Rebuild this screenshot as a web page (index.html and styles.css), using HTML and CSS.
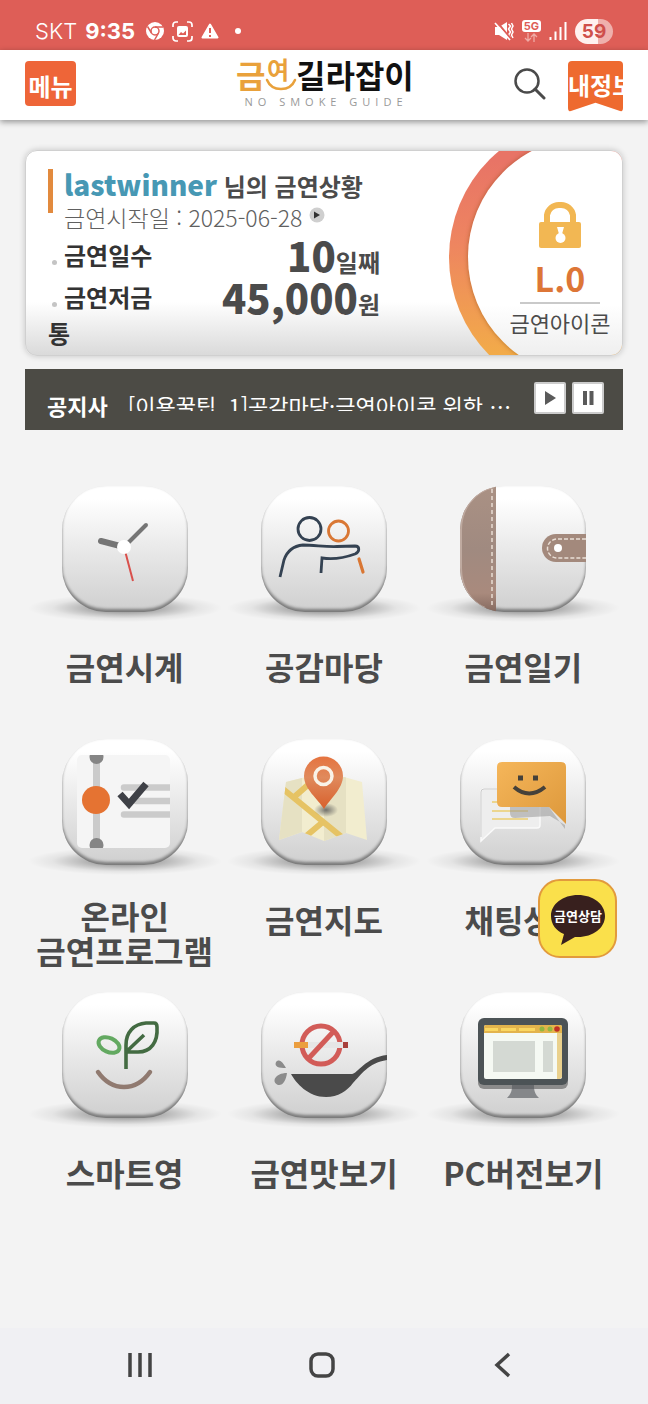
FILE: index.html
```html
<!doctype html>
<html lang="ko">

<head>
    <meta charset="utf-8">
    <meta name="viewport" content="width=device-width, initial-scale=1.0">
    <title>금연길라잡이</title>
    <link rel="stylesheet" href="styles.css">
</head>

<body>
    <!-- 상태 표시줄 -->
    <div class="status-bar">
        <div class="status-left">
            <span class="carrier">SKT</span>
            <span class="clock">9:35</span>
            <svg class="status-icon" width="18" height="18" viewBox="0 0 18 18">
                <circle cx="9" cy="9" r="9" fill="#fff"/>
                <circle cx="9" cy="9" r="4" fill="#fff" stroke="#de5e57" stroke-width="1.5"/>
                <path d="M9 5h8M5.500 11L1.500 4.500M12.500 11L8.500 18" stroke="#de5e57" stroke-width="1.500" fill="none"/>
            </svg>
            <svg class="status-icon" width="21" height="21" viewBox="0 0 21 21">
                <path d="M1 6V4a3 3 0 0 1 3-3h2M15 1h2a3 3 0 0 1 3 3v2M20 15v2a3 3 0 0 1-3 3h-2M6 20H4a3 3 0 0 1-3-3v-2" fill="none" stroke="#fff" stroke-width="1.700"/>
                <rect x="5" y="5" width="11" height="11" rx="2" fill="#fff"/>
                <path d="M6.500 14l2.500-3 2 1.500 3-3v4.500z" fill="#de5e57"/>
            </svg>
            <svg class="status-icon" width="18" height="16" viewBox="0 0 18 16">
                <path d="M9 1.500L16.500 14.500H1.500z" fill="#fff" stroke="#fff" stroke-width="2" stroke-linejoin="round"/>
                <path d="M9 5v5M9 12v2" stroke="#de5e57" stroke-width="2"/>
            </svg>
            <span class="dot"></span>
        </div>
        <div class="status-right">
            <svg width="20" height="20" viewBox="0 0 20 20">
                <path d="M1 6h4l8-5v18l-8-5H1z" fill="#fff"/>
                <path d="M14.500 3l2 2-2 3 2 3-2 3 2 3M17.500 2l1.500 3-1.500 3 1.500 3-1.500 3 1.500 3" fill="none" stroke="#fff" stroke-width="1.500"/>
                <path d="M3 1l14 17" stroke="#de5e57" stroke-width="2"/>
                <path d="M1 2l15 17" stroke="#fff" stroke-width="1.700"/>
            </svg>
            <span class="network">
                <b>5G</b>
                <svg width="14" height="9" viewBox="0 0 14 9">
                    <path d="M4 0v8M1 5l3 3 3-3M10 9V1M7 4l3-3 3 3" fill="none" stroke="#efaaa5" stroke-width="1.300"/>
                </svg>
            </span>
            <svg width="18" height="18" viewBox="0 0 18 18">
                <path d="M1.500 18v-3M6.500 18V9.500M11.500 18V5M16.500 18V0" stroke="#fff" stroke-width="2"/>
            </svg>
            <span class="battery">59</span>
        </div>
    </div>

    <header class="header">
        <button class="menu-button" type="button">메뉴</button>
        <a class="logo" href="#" aria-label="금연길라잡이">
            <svg width="176" height="34" viewBox="0 0 176 34">
                <text x="0" y="27" class="logo-orange">금</text>
                <text x="31" y="18" class="logo-orange logo-small">여</text>
                <path d="M31 19c5 12 23 12 28 0" fill="none" stroke="#e9a13b" stroke-width="2.500" stroke-linecap="round"/>
                <text x="60" y="27" class="logo-black">길라잡이</text>
            </svg>
            <span class="logo-sub">NO SMOKE GUIDE</span>
        </a>
        <div class="header-right">
            <button class="search-button" type="button" aria-label="검색">
                <svg width="32" height="32" viewBox="0 0 32 32">
                    <circle cx="13" cy="13" r="11.500" fill="none" stroke="#4a4a4a" stroke-width="2.500"/>
                    <path d="M21 21l9 9" stroke="#4a4a4a" stroke-width="3" stroke-linecap="round"/>
                </svg>
            </button>
            <a class="my-info" href="#">내정보</a>
        </div>
    </header>

    <main class="main">
        <!-- 금연상황 -->
        <section class="card">
            <div class="summary">
                <div class="summary-head">
                    <div>
                        <h1 class="user"><strong>lastwinner</strong> 님의 금연상황</h1>
                        <p class="start-date">금연시작일 : 2025-06-28
                            <svg width="16" height="16" viewBox="0 0 16 16">
                                <circle cx="8" cy="8" r="7.500" fill="#cfcfcf"/>
                                <path d="M5 4.500l6 3.500-6 3.500z" fill="#333"/>
                            </svg>
                        </p>
                    </div>
                </div>
                <ul class="stats">
                    <li>
                        <span class="stat-label">금연일수</span>
                        <span class="stat-value"><strong>10</strong>일째</span>
                    </li>
                    <li>
                        <span class="stat-label">금연저금통</span>
                        <span class="stat-value"><strong>45,000</strong>원</span>
                    </li>
                </ul>
            </div>
            <div class="level">
                <svg width="42" height="46" viewBox="0 0 42 46">
                    <path d="M8 22V13a12 12 0 0 1 12-10h2a12 12 0 0 1 12 10v9" fill="none" stroke="#f2b753" stroke-width="6"/>
                    <rect x="0" y="20" width="42" height="26" rx="2" fill="#f2b753"/>
                    <path d="M18 25h7l-2 7h-3z" fill="#fff"/>
                    <circle cx="21.500" cy="36" r="5" fill="#fff"/>
                </svg>
                <strong class="level-value">L.0</strong>
                <span class="level-label">금연아이콘</span>
            </div>
        </section>

        <!-- 공지사항 -->
        <section class="notice">
            <h2 class="notice-title">공지사</h2>
            <a class="notice-text" href="#">[이용꿀팁_1]공감마당·금연아이콘 위한 ⋯</a>
            <button class="notice-button" type="button" aria-label="재생">
                <svg width="12" height="14" viewBox="0 0 12 14"><path d="M1 0l11 7-11 7z" fill="#5a5a5a"/></svg>
            </button>
            <button class="notice-button" type="button" aria-label="일시정지">
                <svg width="12" height="14" viewBox="0 0 12 14"><path d="M1 0h4v14H1zM7.500 0h4v14h-4z" fill="#5a5a5a"/></svg>
            </button>
        </section>

        <!-- 메뉴 아이콘 -->
        <nav class="menu-grid">
            <a class="menu-item" href="#">
                <span class="tile">
                    <svg class="tile-icon" viewBox="0 0 126 126">
                        <path d="M39 55l23 6" stroke="#757575" stroke-width="6" stroke-linecap="round"/>
                        <path d="M62 61l22-22" stroke="#757575" stroke-width="4" stroke-linecap="round"/>
                        <path d="M62 61l9 34" stroke="#d9504c" stroke-width="2"/>
                        <circle cx="62" cy="61" r="7" fill="#fff"/>
                    </svg>
                </span>
                <span class="label">금연시계</span>
            </a>
            <a class="menu-item" href="#">
                <span class="tile">
                    <svg class="tile-icon" viewBox="0 0 126 126" fill="none" stroke="#344252" stroke-width="2.800">
                        <circle cx="48.500" cy="43" r="11.500"/>
                        <circle cx="77.500" cy="45" r="10" stroke="#d97734"/>
                        <path d="M19 91l4-17c3-9 9-14 19-15 12 0 22 2 34 1.500l18-.5c5 0 5 6 0 8-11 4-21 6-33 4l-1 15"/>
                        <path d="M98 73l4 13" stroke="#d97734" stroke-width="3.200" stroke-linecap="round"/>
                    </svg>
                </span>
                <span class="label">공감마당</span>
            </a>
            <a class="menu-item" href="#">
                <span class="tile">
                    <svg class="tile-icon" viewBox="0 0 126 126">
                        <defs>
                            <linearGradient id="leather" x1="0" y1="0" x2="0" y2="1">
                                <stop offset="0" stop-color="#aa9184"/>
                                <stop offset="0.500" stop-color="#a08a80"/>
                                <stop offset="0.850" stop-color="#a98a7d"/>
                                <stop offset="1" stop-color="#84695f"/>
                            </linearGradient>
                        </defs>
                        <path d="M36 0v126A44 44 0 0 1 0 82V44A44 44 0 0 1 36 0z" fill="url(#leather)"/>
                        <path d="M34 1C14 5 1 23 1 44v38c0 20 10 34 24 40" fill="none" stroke="#bfaaa0" stroke-width="2"/>
                        <path d="M32 3v118" stroke="#e9ddd3" stroke-width="1.500" stroke-dasharray="4 3"/>
                        <path d="M126 48H96a14 14 0 0 0 0 28h30z" fill="#a3897c"/>
                        <path d="M126 53H97a9 9 0 0 0 0 19h29" fill="none" stroke="#eadfd6" stroke-width="1.500" stroke-dasharray="4 2"/>
                        <circle cx="98" cy="62" r="4" fill="#fff"/>
                    </svg>
                </span>
                <span class="label">금연일기</span>
            </a>

            <a class="menu-item" href="#">
                <span class="tile">
                    <svg class="tile-icon" viewBox="0 0 126 126">
                        <defs><clipPath id="panel"><rect x="15" y="16" width="93" height="93" rx="5"/></clipPath></defs>
                        <g clip-path="url(#panel)">
                            <path d="M15 16h93v93H15z" fill="#f5f5f5"/>
                            <path d="M34.500 16v93" stroke="#cbcbcb" stroke-width="7"/>
                            <path d="M62 48.500h50M74 62h40M62 75.500h50" stroke="#cbcbcb" stroke-width="6.500" stroke-linecap="round"/>
                            <circle cx="34.500" cy="18" r="7" fill="#858585"/>
                            <circle cx="34.500" cy="106" r="7" fill="#858585"/>
                            <circle cx="34" cy="61" r="14" fill="#e57332"/>
                        </g>
                        <path d="M58 55l9 10 17-20" fill="none" stroke="#3f4147" stroke-width="7"/>
                    </svg>
                </span>
                <span class="label two-lines">온라인<br>금연프로그램</span>
            </a>
            <a class="menu-item" href="#">
                <span class="tile">
                    <svg class="tile-icon" viewBox="0 0 126 126">
                        <defs>
                            <clipPath id="map"><path d="M25 43l20-5 18 5 20-5 18 5 5 58-21-7-22 8-22-9-23 8z"/></clipPath>
                            <linearGradient id="pin" x1="0" y1="0" x2="0" y2="1">
                                <stop offset="0" stop-color="#e5733f"/>
                                <stop offset="0.400" stop-color="#e08a5c"/>
                                <stop offset="1" stop-color="#d8602c"/>
                            </linearGradient>
                            <radialGradient id="pin-shade">
                                <stop offset="0" stop-color="#555" stop-opacity="0.800"/>
                                <stop offset="1" stop-color="#555" stop-opacity="0"/>
                            </radialGradient>
                        </defs>
                        <g clip-path="url(#map)">
                            <path d="M15 35h95v70H15z" fill="#f2edcf"/>
                            <path d="M15 35h26v70H15zM63 35h22v70H63z" fill="#e6e1c3"/>
                            <path d="M22 50l60 49M32 59l16-14M63 82L44 98" stroke="#e6c364" stroke-width="6"/>
                        </g>
                        <ellipse cx="65" cy="71" rx="12" ry="7" fill="url(#pin-shade)"/>
                        <path d="M63 70C57 60 43 50 43 37a19.500 19.500 0 0 1 39 0c0 13-14 24-19 33z" fill="url(#pin)"/>
                        <circle cx="62.500" cy="37" r="8.500" fill="none" stroke="#f9f3e8" stroke-width="3.500"/>
                    </svg>
                </span>
                <span class="label">금연지도</span>
            </a>
            <a class="menu-item" href="#">
                <span class="tile">
                    <svg class="tile-icon" viewBox="0 0 126 126">
                        <defs>
                            <linearGradient id="bubble" x1="0" y1="0" x2="1" y2="1">
                                <stop offset="0" stop-color="#f5b65a"/>
                                <stop offset="1" stop-color="#dd983b"/>
                            </linearGradient>
                        </defs>
                        <path d="M24 50h53q3 0 3 3v33q0 3-3 3H35L21 102V53q0-3 3-3z" fill="#eee" stroke="#fafafa" stroke-width="1.500"/>
                        <path d="M21 98V53q0-3 3-3h13" fill="none" stroke="#c9c9c9"/>
                        <path d="M32 63h20M32 72h36M32 80h36" stroke="#ecd68f" stroke-width="2"/>
                        <path d="M50 68h39l16 22v-4L90 77l-35 2q-5 0-5-5z" fill="#999" opacity="0.550"/>
                        <path d="M42 23h59q5 0 5 5v57L89 68H42q-5 0-5-5V28q0-5 5-5z" fill="url(#bubble)"/>
                        <path d="M58 36.500h5v5h-5zM73 36.500h5v5h-5z" fill="#45413a"/>
                        <path d="M54 48q15 13 31 0" fill="none" stroke="#45413a" stroke-width="4"/>
                    </svg>
                </span>
                <span class="label">채팅상담</span>
            </a>

            <a class="menu-item" href="#">
                <span class="tile">
                    <svg class="tile-icon" viewBox="0 0 126 126" fill="none">
                        <ellipse cx="47" cy="53" rx="11" ry="7" stroke="#63a961" stroke-width="4" transform="rotate(24 47 53)"/>
                        <path d="M64 77V53c0-13 8-21 20-22h8q3 0 3 4c1 15-6 25-19 25H64l18-17" stroke="#436b42" stroke-width="3.600" stroke-linejoin="round"/>
                        <path d="M36 80c14 20 38 20 52 0" stroke="#907a70" stroke-width="4.500" stroke-linecap="round"/>
                    </svg>
                </span>
                <span class="label">스마트영</span>
            </a>
            <a class="menu-item" href="#">
                <span class="tile">
                    <svg class="tile-icon" viewBox="0 0 126 126">
                        <circle cx="60" cy="53" r="19" fill="none" stroke="#d25c58" stroke-width="5"/>
                        <path d="M46 50h36v6H46z" fill="#e6e6e6"/>
                        <path d="M33 50h14v6H33z" fill="#eb9e3f"/>
                        <path d="M82 50h5v6h-5z" fill="#a8403c"/>
                        <path d="M47 67l26-28" stroke="#d25c58" stroke-width="5"/>
                        <path d="M30 82h61c5 0 14-17 35-19v5c-19 3-26 15-34 23-6 8-15 14-27 14-18 0-30-14-35-23z" fill="#4a4a4a"/>
                        <path d="M15 70c4-4 7 1 10 6-7 0-12-1-10-6zM26 81c-1 7-4 13-9 12-7-3-3-12 9-12z" fill="#8b8b8b"/>
                    </svg>
                </span>
                <span class="label">금연맛보기</span>
            </a>
            <a class="menu-item" href="#">
                <span class="tile">
                    <svg class="tile-icon" viewBox="0 0 126 126">
                        <rect x="18" y="32" width="90" height="65" rx="6" fill="#8b8b8b"/>
                        <path d="M52 93h22c0 6 1 9 5 13H47c4-4 5-7 5-13z" fill="#85878a"/>
                        <path d="M52 93h22v4H52z" fill="#696b6e"/>
                        <rect x="18" y="26" width="90" height="67" rx="6" fill="#4c5356"/>
                        <rect x="24" y="33" width="78" height="54" rx="2" fill="#f5f9f3"/>
                        <path d="M97 40h5v45l-2 2h-3z" fill="#ead18d"/>
                        <path d="M24 41v-6q0-2 2-2h74q2 0 2 2v6z" fill="#e3b44c"/>
                        <path d="M25 36h13v3H25zM41 36h15v3H41zM59 36h16v3H59z" fill="#fad760"/>
                        <circle cx="82" cy="37" r="2.500" fill="#93b840"/>
                        <circle cx="90" cy="37" r="2.500" fill="#93b840"/>
                        <circle cx="97" cy="37" r="2.800" fill="#bf3024"/>
                        <path d="M33 49h42v31H33zM83 49h10v31H83z" fill="#d4d9d3"/>
                    </svg>
                </span>
                <span class="label">PC버전보기</span>
            </a>
        </nav>
    </main>

    <!-- 카카오 상담 버튼 -->
    <button class="talk-button" type="button">
        <svg width="58" height="54" viewBox="0 0 58 54">
            <path d="M29 1c15 0 27 9 27 21S44 43 29 43h-3L12 51l3-11C7 37 2 30 2 22 2 10 14 1 29 1z" fill="#38201e"/>
            <text x="29" y="27" class="talk-text">금연상담</text>
        </svg>
    </button>

    <nav class="bottom-bar">
        <button type="button" aria-label="최근 앱">
            <svg width="28" height="28" viewBox="0 0 28 28"><path d="M4 2v24M14 2v24M24 2v24" stroke="#444" stroke-width="3.500"/></svg>
        </button>
        <button type="button" aria-label="홈">
            <svg width="28" height="28" viewBox="0 0 28 28"><rect x="3" y="3" width="22" height="22" rx="7" fill="none" stroke="#444" stroke-width="3.500"/></svg>
        </button>
        <button type="button" aria-label="뒤로">
            <svg width="28" height="28" viewBox="0 0 28 28"><path d="M20 3L8 14l12 11" fill="none" stroke="#444" stroke-width="3.500"/></svg>
        </button>
    </nav>
</body>

</html>
```
FILE: styles.css
```css
* {
    box-sizing: border-box;
}

body {
    display: flex;
    flex-direction: column;
    min-height: 100vh;
    margin: 0;
    background-color: #f3f3f3;
    color: #4b4b4b;
    font-family: "Noto Sans CJK KR", sans-serif;
}

h1,
h2,
p,
ul {
    margin: 0;
    padding: 0;
}

a {
    color: inherit;
    text-decoration: none;
}

button {
    margin: 0;
    padding: 0;
    border: none;
    background: none;
    font-family: inherit;
    cursor: pointer;
}

svg {
    display: block;
}

/***** 상태 표시줄 *****/
.status-bar {
    display: flex;
    justify-content: space-between;
    height: 50px;
    padding: 12px 35px 0;
    background-color: #de5e57;
    color: #fff;
    font-family: Inter, sans-serif;
    font-size: 22px;
}

.status-left,
.status-right {
    display: flex;
    align-items: center;
    gap: 8px;
}

.carrier {
    font-weight: 300;
}

.clock {
    font-weight: 700;
}

.status-icon {
    margin-left: 3px;
}

.status-icon + .status-icon {
    margin-left: 0;
}

.dot {
    width: 6px;
    height: 6px;
    margin-left: 8px;
    border-radius: 50%;
    background-color: #fff;
}

.network {
    display: flex;
    flex-direction: column;
    align-items: center;
    gap: 1px;
}

.network b {
    padding: 0 2px;
    border-radius: 3px;
    background-color: #fff;
    color: #de5e57;
    font-size: 11px;
    line-height: 12px;
}

.battery {
    width: 38px;
    border-radius: 13px;
    background: linear-gradient(90deg, #fff0ef 60%, #efb0ac 60%);
    color: #cf4f4b;
    font-size: 19px;
    font-weight: 700;
    line-height: 25px;
    text-align: center;
}

/***** 헤더 *****/
.header {
    position: relative;
    display: grid;
    grid-template-columns: 1fr auto 1fr;
    align-items: start;
    height: 70px;
    padding: 11px 25px 0;
    background-color: #fff;
    box-shadow: 0 2px 6px rgba(0, 0, 0, 0.4);
}

.menu-button {
    width: 51px;
    height: 45px;
    padding-top: 4px;
    border-radius: 4px;
    background-color: #ee6538;
    color: #fff;
    font-size: 24px;
    font-weight: 700;
    line-height: 38px;
}

.logo {
    display: flex;
    flex-direction: column;
    align-items: center;
}

.logo svg {
    overflow: visible;
    font-size: 32px;
    font-weight: 700;
}

.logo-orange {
    fill: #e9a13b;
}

.logo-small {
    font-size: 24px;
}

.logo-black {
    fill: #111;
}

.logo-sub {
    padding-left: 4px;
    color: #999;
    font-family: "Open Sans", sans-serif;
    font-size: 11px;
    letter-spacing: 5px;
    line-height: 14px;
}

.header-right {
    display: flex;
    justify-content: flex-end;
    gap: 22px;
}

.search-button {
    height: 45px;
}

.my-info {
    width: 55px;
    height: 51px;
    overflow: hidden;
    border-radius: 4px;
    background-color: #ee6a2f;
    clip-path: polygon(0 0, 100% 0, 100% 100%, 50% 82%, 0 100%);
    color: #fff;
    font-size: 24px;
    font-weight: 700;
    line-height: 48px;
    white-space: nowrap;
}

/***** 금연상황 카드 *****/
.main {
    padding: 30px 25px;
}

.card {
    position: relative;
    z-index: 0;
    display: flex;
    justify-content: space-between;
    overflow: hidden;
    border: 1px solid #d0d0d0;
    border-radius: 12px;
    background: linear-gradient(#fff 74%, #dadada);
    box-shadow: 0 0 6px rgba(0, 0, 0, 0.2);
}

/* 카드 오른쪽의 둥근 띠 */
.card::before,
.card::after {
    content: "";
    position: absolute;
    z-index: -1;
    border-radius: 50%;
}

.card::before {
    top: -32px;
    right: -104px;
    width: 277px;
    height: 277px;
    background: linear-gradient(#e87466 15%, #ee8560 45%, #f2ab49 85%);
}

.card::after {
    top: -14px;
    right: -86px;
    width: 240px;
    height: 240px;
    background: linear-gradient(#fff 70%, #eee 92%);
    box-shadow: 0 0 4px rgba(120, 60, 0, 0.5);
}

.summary {
    width: 354px;
    padding: 18px 0 4px 22px;
}

.summary-head {
    display: flex;
    gap: 11px;
    height: 65px;
}

.summary-head::before {
    content: "";
    width: 5px;
    height: 44px;
    background-color: #e28a3e;
}

.user {
    font-size: 24px;
    line-height: 30px;
    white-space: nowrap;
}

.user strong {
    color: #4798b4;
    font-size: 28px;
    line-height: 30px;
}

.start-date {
    display: flex;
    gap: 7px;
    color: #606060;
    font-size: 23px;
    font-weight: 300;
    line-height: 32px;
    white-space: nowrap;
}

.start-date svg {
    margin-top: 6px;
}

.stats {
    list-style: none;
}

.stats li {
    display: flex;
    justify-content: space-between;
    font-weight: 700;
}

.stat-label {
    width: 112px;
    padding-top: 3px;
    color: #333;
    font-size: 24px;
    line-height: 36px;
}

.stat-label::before {
    content: "";
    display: inline-block;
    width: 5px;
    height: 5px;
    margin: 0 7px 0 4px;
    border-radius: 50%;
    background-color: #c4c4c4;
}

.stat-value {
    font-size: 24px;
    line-height: 42px;
    height: 42px;
}

.stat-value strong {
    font-size: 40px;
}

.level {
    display: flex;
    flex-direction: column;
    align-items: center;
    width: 124px;
    padding-top: 51px;
}

.level-value {
    width: 80px;
    margin-top: 6px;
    border-bottom: 2px solid #c9c9c9;
    color: #dd7637;
    font-size: 34px;
    line-height: 48px;
    text-align: center;
}

.level-label {
    font-size: 22px;
    line-height: 36px;
}

/***** 공지사항 *****/
.notice {
    display: flex;
    align-items: flex-start;
    height: 61px;
    margin-top: 13px;
    padding: 13px 19px 0 22px;
    background-color: #4c4b45;
    color: #fff;
}

.notice-title {
    margin-right: 20px;
    font-size: 22px;
    line-height: 46px;
}

.notice-text {
    flex: 1;
    height: 29px;
    overflow: hidden;
    font-size: 22px;
    line-height: 46px;
    white-space: nowrap;
}

.notice-button {
    display: flex;
    align-items: center;
    justify-content: center;
    width: 32px;
    height: 32px;
    margin-left: 6px;
    border: 2px solid #ccc;
    border-radius: 2px;
    background-color: #fff;
}

/***** 메뉴 아이콘 *****/
.menu-grid {
    display: grid;
    grid-template-columns: repeat(3, 1fr);
    grid-auto-rows: 253px;
    margin-top: 56px;
}

.menu-item {
    display: flex;
    flex-direction: column;
    align-items: center;
}

.tile {
    position: relative;
    width: 126px;
    height: 126px;
}

/* 바닥 그림자 */
.tile::before {
    content: "";
    position: absolute;
    right: -34px;
    bottom: -10px;
    left: -34px;
    height: 28px;
    background: radial-gradient(closest-side, rgba(0, 0, 0, 0.5), rgba(0, 0, 0, 0.2) 50%, rgba(0, 0, 0, 0.06) 75%, transparent);
}

.tile-icon {
    position: relative;
    width: 100%;
    height: 100%;
    border-radius: 44px;
    background: linear-gradient(#fff 10%, #e9e9e9 50%, #cfcfcf);
    box-shadow: inset 0 -3px 3px rgba(0, 0, 0, 0.4), inset 0 0 2px rgba(0, 0, 0, 0.1);
}

.label {
    margin-top: 33px;
    font-size: 32px;
    font-weight: 700;
    line-height: 42px;
    text-align: center;
    white-space: nowrap;
}

.two-lines {
    line-height: 35px;
}

/***** 상담 버튼 *****/
.talk-button {
    position: fixed;
    right: 31px;
    bottom: 446px;
    display: flex;
    align-items: center;
    justify-content: center;
    width: 79px;
    height: 79px;
    padding-top: 5px;
    border: 2px solid #e29a3c;
    border-radius: 22px;
    background-color: #fae04b;
}

.talk-text {
    fill: #fff;
    font-size: 13px;
    font-weight: 700;
    text-anchor: middle;
}

/***** 하단 바 *****/
.bottom-bar {
    display: flex;
    align-items: center;
    justify-content: space-between;
    height: 76px;
    margin-top: auto;
    padding: 0 131px 2px 126px;
    background-color: #f0f0f3;
}
```
